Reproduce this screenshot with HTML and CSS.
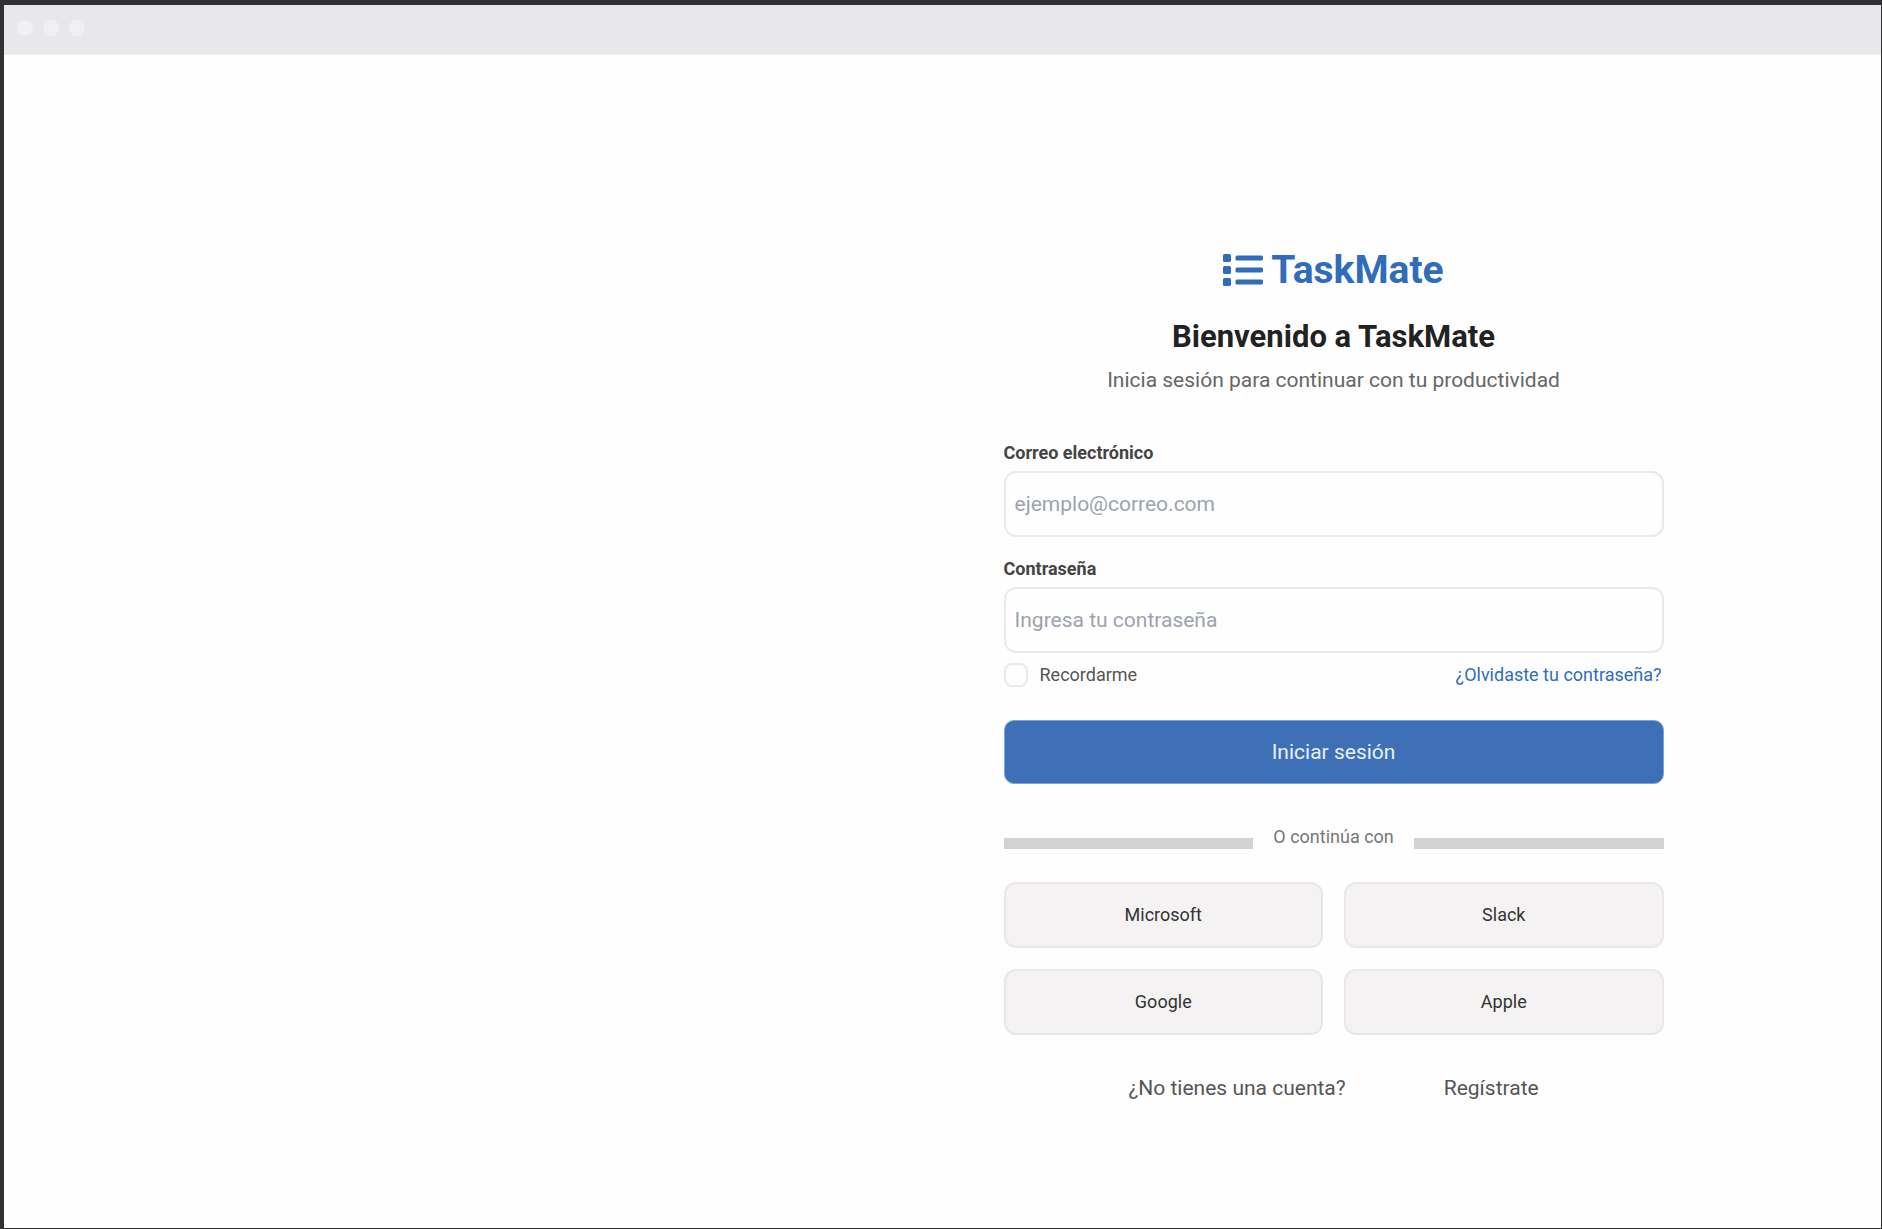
FILE: index.html
```html
<!DOCTYPE html>
<html lang="es">
<head>
<meta charset="utf-8">
<meta name="viewport" content="width=device-width, initial-scale=1">
<title>TaskMate</title>
<link rel="stylesheet" href="styles.css">
</head>
<body>
<div class="window">
  <header class="titlebar">
    <span class="dot"></span>
    <span class="dot"></span>
    <span class="dot"></span>
  </header>
  <main class="content">
    <section class="login">
      <div class="logo">
        <svg class="logo-icon" viewBox="0 0 40 32" aria-hidden="true">
          <rect x="0" y="0" width="8" height="8" rx="1.5"/>
          <rect x="0" y="12" width="8" height="8" rx="1.5"/>
          <rect x="0" y="24" width="8" height="8" rx="1.5"/>
          <rect x="12.500" y="1.500" width="27.500" height="5" rx="1.500"/>
          <rect x="12.500" y="13.500" width="27.500" height="5" rx="1.500"/>
          <rect x="12.500" y="25.500" width="27.500" height="5" rx="1.500"/>
        </svg>
        <span class="logo-name">TaskMate</span>
      </div>
      <h1 class="title">Bienvenido a TaskMate</h1>
      <p class="subtitle">Inicia sesión para continuar con tu productividad</p>
      <form class="form">
        <label class="label" for="email">Correo electrónico</label>
        <input class="input" id="email" type="email" placeholder="ejemplo@correo.com">
        <label class="label" for="password">Contraseña</label>
        <input class="input" id="password" type="password" placeholder="Ingresa tu contraseña">
        <div class="options">
          <label class="remember"><input class="checkbox" type="checkbox">Recordarme</label>
          <a class="forgot" href="#">¿Olvidaste tu contraseña?</a>
        </div>
        <button class="submit" type="submit">Iniciar sesión</button>
      </form>
      <div class="divider">
        <span class="divider-text">O continúa con</span>
      </div>
      <div class="providers">
        <button class="provider" type="button">Microsoft</button>
        <button class="provider" type="button">Slack</button>
        <button class="provider" type="button">Google</button>
        <button class="provider" type="button">Apple</button>
      </div>
      <div class="signup">
        <span>¿No tienes una cuenta?</span>
        <a class="signup-link" href="#">Regístrate</a>
      </div>
    </section>
  </main>
</div>
</body>
</html>
```
FILE: styles.css
```css
* {
  box-sizing: border-box;
}

body {
  margin: 0;
  background: #323131;
  color: #555;
  font-family: Roboto, sans-serif;
  font-size: 21px;
  line-height: 24px;
}

.window {
  display: flex;
  flex-direction: column;
  min-height: 100vh;
  border: 1px solid #323131;
  border-width: 5px 1px 1px 4px;
}

.titlebar {
  display: flex;
  align-items: center;
  gap: 10px;
  height: 50px;
  padding: 0 13px 3px;
  border-bottom: 1px solid #efeff0;
  background: #e8e7ec;
}

.dot {
  width: 16px;
  height: 16px;
  border-radius: 50%;
  background: #f0f0f4;
}

.content {
  display: grid;
  grid-template-columns: 5fr 7fr;
  flex: 1;
  background: #fefefe;
}

.login {
  grid-column: 2;
  justify-self: center;
  width: 660px;
  max-width: 100%;
  padding: 191px 0 48px;
}

.logo {
  display: flex;
  align-items: center;
  justify-content: center;
  gap: 8px;
  height: 48px;
  color: #2f6dba;
}

.logo-icon {
  width: 40px;
  height: 32px;
  fill: currentColor;
}

.logo-name {
  font-size: 39px;
  font-weight: 700;
  line-height: 48px;
}

.title {
  margin: 25px 0 13px;
  color: #222;
  font-size: 31px;
  font-weight: 700;
  line-height: 36px;
  text-align: center;
}

.subtitle {
  margin: 0 0 49px;
  color: #666;
  text-align: center;
}

.form {
  display: flex;
  flex-direction: column;
}

.label {
  margin-bottom: 6px;
  color: #444;
  font-size: 18px;
  font-weight: 700;
}

.input {
  height: 66px;
  margin: 0 0 20px;
  padding: 0 9px;
  border: 2px solid #ebe9ea;
  border-radius: 12px;
  background: #fefefe;
  color: #444;
  font: inherit;
}

.input::placeholder {
  color: #9ca3af;
  opacity: 1;
}

.options {
  display: flex;
  align-items: center;
  justify-content: space-between;
  margin: -10px 0 33px;
  padding-right: 2px;
  font-size: 18px;
}

.remember {
  display: flex;
  align-items: center;
  gap: 12px;
}

.checkbox {
  width: 24px;
  height: 24px;
  margin: 0;
  border: 2px solid #ebe9ea;
  border-radius: 8px;
  appearance: none;
}

.forgot {
  color: #2f6dba;
  text-decoration: none;
}

.submit {
  height: 64px;
  border: 1px solid #6ba9e0;
  border-radius: 10px;
  background: #3e6fb7;
  color: #e3f4ff;
  font: inherit;
}

.divider {
  display: flex;
  align-items: center;
  gap: 20px;
  margin: 40px 0 33px;
  color: #777;
  font-size: 18px;
}

.divider::before,
.divider::after {
  content: "";
  flex: 1;
  height: 11px;
  margin-top: 14px;
  background: #d3d2d2;
}

.providers {
  display: grid;
  grid-template-columns: 1fr 1fr;
  gap: 21px;
}

.provider {
  height: 66px;
  border: 2px solid #e9e7e8;
  border-radius: 12px;
  background: #f4f2f3;
  color: #333;
  font: inherit;
  font-size: 18px;
}

.signup {
  display: flex;
  justify-content: center;
  gap: 98px;
  margin-top: 41px;
}

.signup-link {
  color: inherit;
  text-decoration: none;
}
```
